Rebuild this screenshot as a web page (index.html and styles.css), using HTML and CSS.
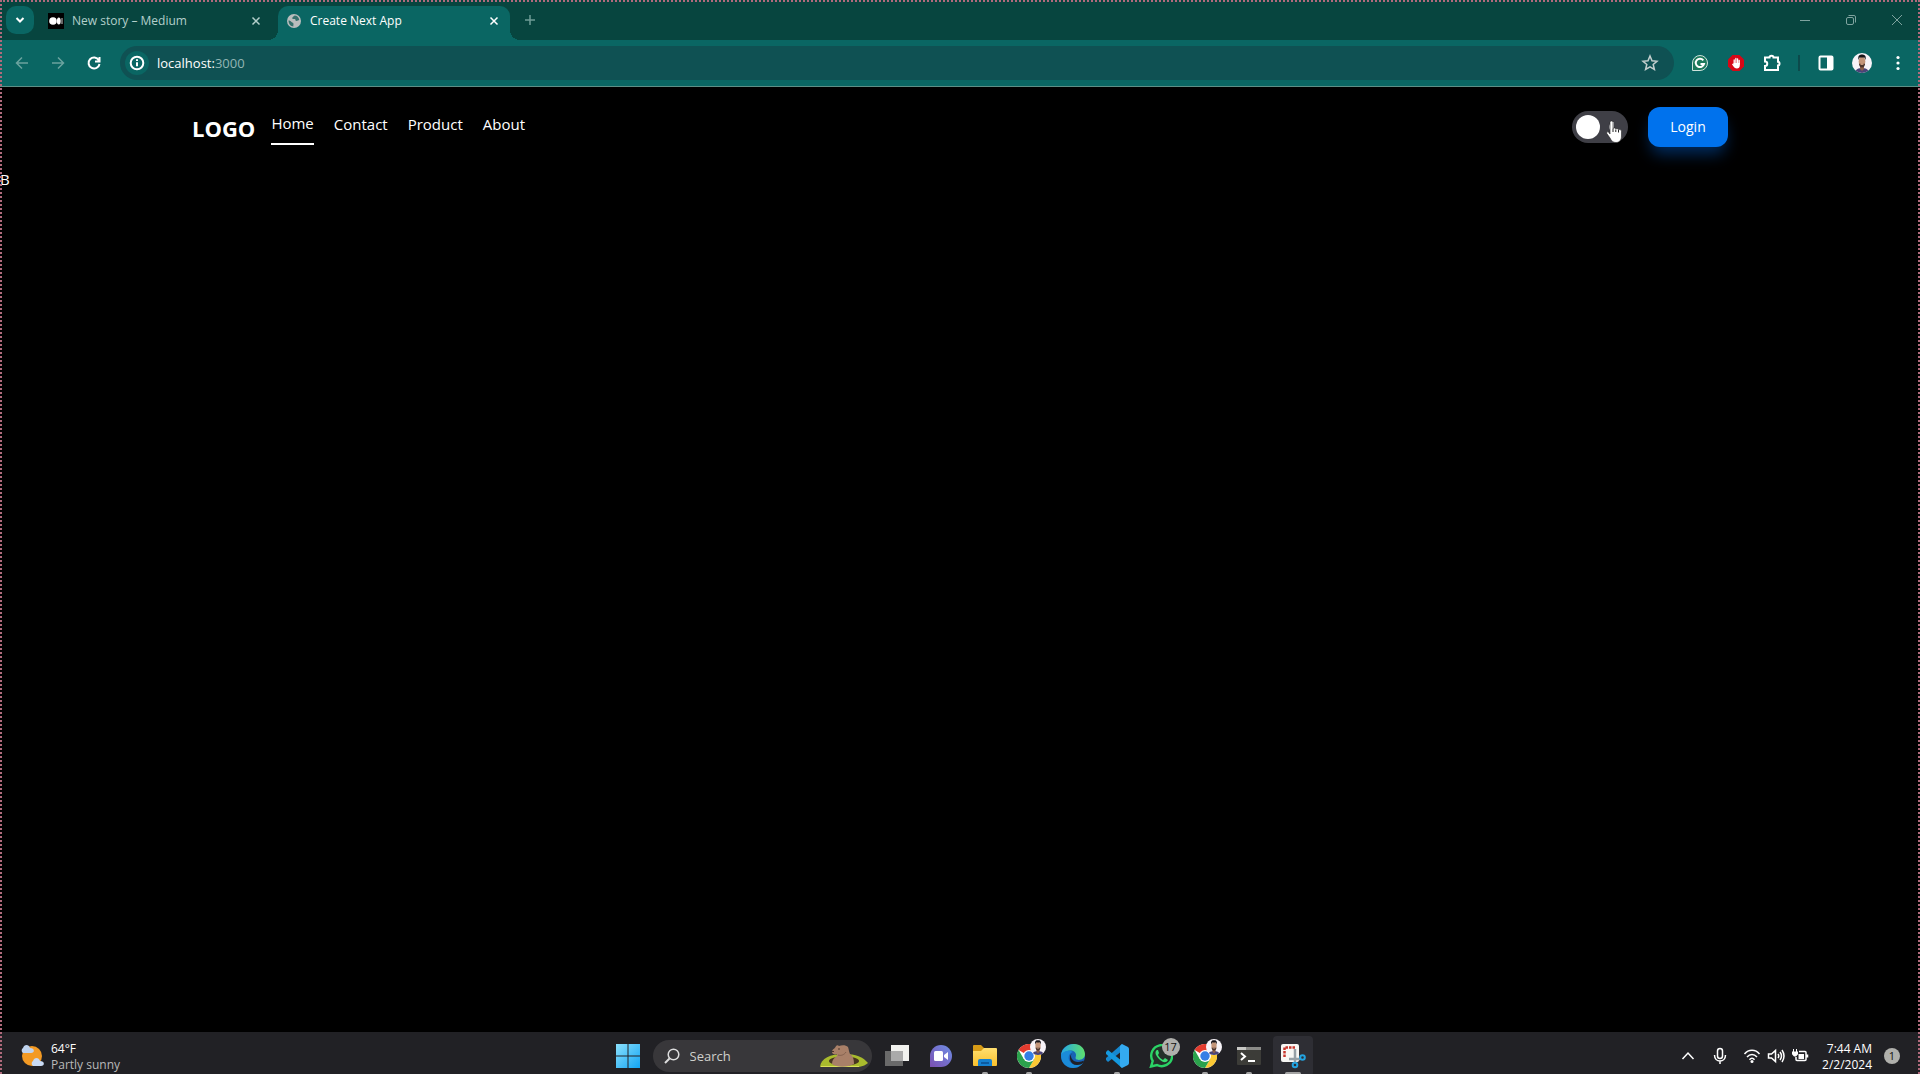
FILE: index.html
```html
<!DOCTYPE html>
<html lang="en">
<head>
<meta charset="utf-8">
<title>Create Next App</title>
<link rel="stylesheet" href="styles.css">
</head>
<body>
<svg class="defs" aria-hidden="true">
  <defs>
    <clipPath id="face-clip"><circle cx="10" cy="10" r="10"/></clipPath>
    <linearGradient id="win" x1="0" y1="0" x2="1" y2="1"><stop offset="0" stop-color="#8be0fc"/><stop offset="1" stop-color="#12a5f4"/></linearGradient>
    <linearGradient id="purple" x1="0" y1="1" x2="1" y2="0"><stop offset="0" stop-color="#7b4fb0"/><stop offset="1" stop-color="#6f8fe6"/></linearGradient>
    <linearGradient id="folder" x1="0" y1="0" x2="0" y2="1"><stop offset="0" stop-color="#ffdf70"/><stop offset="1" stop-color="#f9c02c"/></linearGradient>
    <linearGradient id="edge-top" x1="0" y1="0" x2="1" y2="0"><stop offset="0" stop-color="#26a8e6"/><stop offset="1" stop-color="#5fe06c"/></linearGradient>
    <symbol id="face" viewBox="0 0 20 20">
      <g clip-path="url(#face-clip)">
        <rect width="20" height="20" fill="#f7f3f8"/>
        <path d="M3 20c0-4 4-5 7-5s7 1 7 5z" fill="#4a4478"/>
        <path d="M8 12h4v4l-2 2-2-2z" fill="#8b5e4a"/>
        <ellipse cx="10" cy="8.500" rx="3.300" ry="5" fill="#c39478"/>
        <path d="M6.500 7C5.500 2 8 1.500 10 1.500s4.500.5 3.500 5.500l-1-2.500h-5z" fill="#171317"/>
        <path d="M6.900 10.500c1 .6 5.200.6 6.200 0-.2 2.500-1.300 4-3.100 4s-2.800-1.500-3.100-4z" fill="#4a332c"/>
        <path d="M8.500 11.500h3" stroke="#c39478"/>
      </g>
    </symbol>
    <symbol id="chrome" viewBox="0 0 24 24">
      <circle cx="12" cy="12" r="12" fill="#fff"/>
      <path d="M12 12 1.600 6A12 12 0 0 1 22.400 6z" fill="#e33b2e"/>
      <path d="M12 6h10.400A12 12 0 0 1 12 24l5.200-9z" fill="#fcc934"/>
      <path d="M6.800 15 1.600 6A12 12 0 0 0 12 24l5.200-9z" fill="#2ba24c"/>
      <circle cx="12" cy="12" r="6" fill="#fff"/><circle cx="12" cy="12" r="4.700" fill="#347fe5"/>
    </symbol>
  </defs>
</svg>

<div class="screen">
  <div class="tabstrip">
    <button class="tab-search" aria-label="Search tabs"><svg width="12" height="12" viewBox="0 0 12 12"><path d="M2.500 4 6 7.500 9.500 4" class="line bold"/></svg></button>
    <div class="tab">
      <svg width="16" height="16" viewBox="0 0 16 16"><rect width="16" height="16" fill="#000"/><circle cx="5" cy="8" r="3.800" fill="#fff"/><ellipse cx="10.800" cy="8" rx="1.900" ry="3.500" fill="#fff"/><path d="M14 5v6" stroke="#ccc"/></svg>
      <span class="tab-title">New story – Medium</span>
      <button class="close" aria-label="Close tab"><svg width="10" height="10" viewBox="0 0 10 10"><path d="m1.500 1.500 7 7m0-7-7 7" class="line"/></svg></button>
    </div>
    <div class="tab active">
      <svg width="16" height="16" viewBox="0 0 16 16"><circle cx="8" cy="8" r="7" fill="#b9bdbd"/><path d="M2.500 7.500c1.500 0 2 .5 3 1.500s2 .5 2 2-.5 1.500 0 2.500c-3 0-5-3-5-6zM8.500 2.500c-1 1.500-2.500 1-2 3.500h2.500c1 1 0 2 1.500 2l2.800-1c-.3-2.500-2.300-4.500-4.800-4.500z" fill="#35706c"/></svg>
      <span class="tab-title">Create Next App</span>
      <button class="close" aria-label="Close tab"><svg width="10" height="10" viewBox="0 0 10 10"><path d="m1.500 1.500 7 7m0-7-7 7" class="line"/></svg></button>
    </div>
    <button class="new-tab" aria-label="New tab"><svg width="12" height="12" viewBox="0 0 12 12"><path d="M6 1v10M1 6h10" class="line"/></svg></button>
    <div class="window-controls">
      <button aria-label="Minimize"><svg width="12" height="12" viewBox="0 0 12 12"><path d="M1 6.500h10" class="line thin"/></svg></button>
      <button aria-label="Restore"><svg width="12" height="12" viewBox="0 0 12 12"><rect x="1.500" y="3.500" width="7" height="7" rx="1.500" class="line thin"/><path d="M3.500 1.500H9a1.500 1.500 0 0 1 1.500 1.500v5.500" class="line thin"/></svg></button>
      <button aria-label="Close"><svg width="12" height="12" viewBox="0 0 12 12"><path d="m1 1 10 10M11 1 1 11" class="line thin"/></svg></button>
    </div>
  </div>

  <div class="toolbar">
    <button class="tool dim" aria-label="Back"><svg width="16" height="16" viewBox="0 0 16 16"><path d="M14 8H3m5-5.500L2.500 8 8 13.500" class="line"/></svg></button>
    <button class="tool dim" aria-label="Forward"><svg width="16" height="16" viewBox="0 0 16 16"><path d="M2 8h11M8 2.500 13.500 8 8 13.500" class="line"/></svg></button>
    <button class="tool" aria-label="Reload"><svg width="16" height="16" viewBox="0 0 16 16"><path d="M12.800 5.200A5.500 5.500 0 1 0 13.500 9M13.500 2v4.500H9" class="line bold"/></svg></button>
    <div class="omnibox">
      <button class="site-info" aria-label="View site information"><svg width="16" height="16" viewBox="0 0 16 16"><circle cx="8" cy="8" r="6.300" class="line bold"/><path d="M8 7.200v4M8 4.300v1.600" class="line bold"/></svg></button>
      <span class="url">localhost:<span>3000</span></span>
      <button class="star" aria-label="Bookmark this tab"><svg width="18" height="18" viewBox="0 0 18 18"><path d="m9 2 2 4.700 5 .5-3.800 3.300 1.200 5L9 12.900l-4.400 2.600 1.200-5L2 7.200l5-.5z" class="line"/></svg></button>
    </div>
    <div class="extensions">
      <button class="tool" aria-label="Grammarly"><svg width="18" height="18" viewBox="0 0 18 18"><path d="M1.500 16.500V9A7.500 7.500 0 1 1 9 16.500z" fill="#1d7a5c" stroke="#cfe3dc"/><path d="M12.300 6.300A4.200 4.200 0 1 0 13 10H9.500" class="line bold"/></svg></button>
      <button class="tool" aria-label="AdBlock"><svg width="18" height="18" viewBox="0 0 18 18"><path d="M5.500 1h7L17 5.500v7L12.500 17h-7L1 12.500v-7z" fill="#d60716"/><path d="M7.200 10V6M8.900 9V4.500M10.600 9V5M12.200 10V6.500" stroke="#fff" stroke-width="1.300" stroke-linecap="round"/><path d="M6.500 9h6.300v2.500c0 2-1.200 3-2.800 3-2 0-3.500-1.500-5-4.300.5-.7 1-.3 1.500.3z" fill="#fff"/></svg></button>
      <button class="tool" aria-label="Extensions"><svg width="18" height="18" viewBox="0 0 18 18"><path d="M2 3.500h4.500c0-2.500 4-2.500 4 0H15v4.200c2 0 2 3.800 0 3.800V16H2v-4c3 0 3-4.500 0-4.500z" class="line bold"/></svg></button>
      <span class="divider"></span>
      <button class="tool" aria-label="Side panel"><svg width="16" height="16" viewBox="0 0 16 16"><rect x="1.500" y="1.500" width="13" height="13" rx="1" class="line bold"/><path d="M9 1h6v14H9z" fill="currentColor"/></svg></button>
      <button class="tool" aria-label="Profile"><svg width="20" height="20"><use href="#face"/></svg></button>
      <button class="tool" aria-label="Menu"><svg width="16" height="16" viewBox="0 0 16 16" fill="currentColor"><circle cx="8" cy="2.500" r="1.600"/><circle cx="8" cy="8" r="1.600"/><circle cx="8" cy="13.500" r="1.600"/></svg></button>
    </div>
  </div>

  <main class="page">
    <header class="navbar">
      <span class="logo">LOGO</span>
      <nav class="links">
        <a href="#" class="current">Home</a>
        <a href="#">Contact</a>
        <a href="#">Product</a>
        <a href="#">About</a>
      </nav>
      <div class="actions">
        <label class="switch">
          <input type="checkbox" aria-label="Dark mode">
          <svg class="moon" width="12" height="12" viewBox="0 0 12 12"><path d="M6 1a5 5 0 0 0 0 10z" fill="#c4c4c8"/></svg>
          <svg class="pointer" width="18" height="24" viewBox="0 0 18 24"><path d="M4 2.500C4 .5 7 .5 7 2.500v6c1-1 2.500-.5 2.800.5 1-.7 2.500-.3 2.700.8 1.200-.6 3 0 3 1.700V16c0 4-2 6.500-5.500 6.500-3 0-4.500-1.500-6-4.500L.8 13.500c-.5-1.600 1.200-2.200 2.200-1L4 14z" fill="#fff" stroke="#222" stroke-width=".6"/><path d="M7 8.500V12M9.800 9.500V12M12.500 10v2.500" stroke="#222"/></svg>
        </label>
        <button class="login">Login</button>
      </div>
    </header>
    <p class="body-text">B</p>
  </main>

  <footer class="taskbar">
    <div class="weather">
      <svg width="26" height="26" viewBox="0 0 26 26"><circle cx="13" cy="13" r="10" fill="#f39a24"/><path d="M4 10a3 3 0 0 1 0-5c1-4 6-4 7 0 5 0 5 5 1 5z" fill="#bfd3ee"/><path d="M14 23a3 3 0 0 1 0-5c1-4 6-4 7 0 5 0 5 5 1 5z" fill="#c9daf3"/></svg>
      <div class="weather-text"><span>64°F</span><span class="muted">Partly sunny</span></div>
    </div>
    <div class="apps">
      <button class="app" aria-label="Start"><svg width="24" height="24" viewBox="0 0 24 24" fill="url(#win)"><path d="M0 0h11.500v11.500H0zM12.500 0H24v11.500H12.500zM0 12.500h11.500V24H0zM12.500 12.500H24V24H12.500z"/></svg></button>
      <label class="search">
        <svg width="16" height="16" viewBox="0 0 16 16"><circle cx="9.500" cy="6.500" r="5.300" class="line"/><path d="M5.500 10.500 1 15" class="line bold"/></svg>
        <input type="text" placeholder="Search">
        <svg width="48" height="24" viewBox="0 0 48 24"><path d="M0 23C1 14 10 10 24 10c12 0 19 3 24 9-2 2-5 3-9 4z" fill="#a9bb2d"/><path d="M1 22.500h38" stroke="#dbe05a"/><ellipse cx="24" cy="17" rx="15" ry="4.500" fill="#483620"/><path d="M12 20c0-4 2-6 5-8v-2c-2 1-5 0-5-2 0-3 3-3 4-6 1-1 2-1 3 0 3-1 7-1 9 1 1 3 1 5 2 7 3 2 4 5 4 10-5 3-17 4-22 0z" fill="#a98068"/><path d="M12 7.500h2M18 5h2" stroke="#4b3529"/><path d="M18 11c3 1 6 0 8-3" stroke="#83604e" fill="none"/></svg>
      </label>
      <button class="app" aria-label="Task view"><svg width="24" height="24" viewBox="0 0 24 24"><path d="M6 1h18v16H6z" fill="#f1f1ee"/><path d="M0 7h18v15H0z" fill="#777" opacity=".85"/><path d="M6 7h12v10H6z" fill="#aaa"/></svg></button>
      <button class="app" aria-label="Chat"><svg width="24" height="24" viewBox="0 0 24 24"><path d="M12 1a11 11 0 0 1 0 22H1V12A11 11 0 0 1 12 1z" fill="url(#purple)"/><rect x="5" y="7" width="9" height="10" rx="1.500" fill="#fff"/><path d="m15 11 4-3v8l-4-3z" fill="#fff"/></svg></button>
      <button class="app running" aria-label="File Explorer"><svg width="24" height="24" viewBox="0 0 24 24"><path d="M0 2q0-1 1-1h7l3 3v5H0z" fill="#d79b16"/><path d="M0 7h8l3-3h12q1 0 1 1v16q0 1-1 1H1q-1 0-1-1z" fill="url(#folder)"/><path d="M5 22v-5q0-2 2-2h10q2 0 2 2v5z" fill="#1580cf"/><path d="M8 19h8" stroke="#0c5a9f" stroke-width="2"/></svg></button>
      <button class="app running" aria-label="Chrome"><svg width="24" height="24"><use href="#chrome"/></svg><svg class="badge face" width="16" height="16"><use href="#face"/></svg></button>
      <button class="app" aria-label="Edge"><svg width="24" height="24" viewBox="0 0 24 24"><circle cx="12" cy="12" r="12" fill="#1763b5"/><path d="M0 11C2-3 23-4 24 10c0 6-7 7-9 5-1-1 0-2 0-4 0-5-8-7-15 0z" fill="url(#edge-top)"/><path d="M0 11c3-5 9-5 12-3-4 1-5 5-4 8 2 5 8 6 14 3-3 5-12 7-18 2-3-3-4-6-4-10z" fill="#1b8bd8"/><path d="M11 9c-3 4 1 9 6 9 3 0 6-2 6-1-1 3-4 4-7 4-7 0-9-8-5-12z" fill="#202027"/></svg></button>
      <button class="app running" aria-label="Visual Studio Code"><svg width="24" height="24" viewBox="0 0 24 24"><path d="m17 7-14 11-2-2v-2L17 0z" fill="#1688cf"/><path d="M17 17 3 6 1 8v2l16 14z" fill="#1599df"/><path d="m17 0 6 3q1 1 1 2v14q0 1-1 2l-6 3-2-2V2z" fill="#34aaf0"/></svg></button>
      <button class="app" aria-label="WhatsApp"><svg width="24" height="24" viewBox="0 0 24 24"><path d="M2 22.500 3.700 17A10.500 10.500 0 1 1 8 21z" fill="#243029" stroke="#2ad365" stroke-width="2.400"/><path d="M8 6c-3 2-1 6 2 9s7 5 9 1l-3-2-2 2c-2-1-4-3-5-5l1-2-1-3z" fill="#38dc70"/></svg><span class="badge count">17</span></button>
      <button class="app running" aria-label="Chrome, second profile"><svg width="24" height="24"><use href="#chrome"/></svg><svg class="badge face" width="16" height="16"><use href="#face"/></svg></button>
      <button class="app running" aria-label="Terminal"><svg width="24" height="24" viewBox="0 0 24 24"><rect y="3" width="24" height="18" rx="1" fill="#3c3c38"/><path d="M0 3h24v3H0z" fill="#8b8b88"/><path d="M0 3h9v3H0z" fill="#c8c8c5"/><path d="m4 9 4 3.500L4 16" fill="none" stroke="#fff" stroke-width="2"/><path d="M11 17h7" stroke="#fff" stroke-width="2"/></svg></button>
      <button class="app running open" aria-label="Snipping Tool"><svg width="26" height="26" viewBox="0 0 26 26"><rect x="1" y="1" width="18" height="18" rx="2" fill="#f7f7f4"/><path d="M4.500 14V4.500H15" fill="none" stroke="#c8372d" stroke-width="2.500" stroke-dasharray="2.500 1"/><path d="M15 6v13M9 16h11" stroke="#96a0a6" stroke-width="2.500"/><circle cx="22.500" cy="14.500" r="2.300" fill="none" stroke="#22a2df" stroke-width="2"/><circle cx="15" cy="22" r="2.300" fill="none" stroke="#22a2df" stroke-width="2"/></svg></button>
    </div>
    <div class="tray">
      <button aria-label="Show hidden icons"><svg width="14" height="14" viewBox="0 0 14 14"><path d="m1.500 10 5.500-6 5.500 6" class="line"/></svg></button>
      <button aria-label="Microphone"><svg width="14" height="18" viewBox="0 0 14 18"><rect x="4.500" y="1.500" width="5" height="10" rx="2.500" class="line"/><path d="M1.500 8c0 8 11 8 11 0M7 14v3" class="line"/></svg></button>
      <button class="status" aria-label="Network, sound and battery">
        <svg width="18" height="16" viewBox="0 0 18 16"><path d="M1.500 6c4-5 11-5 15 0M4 9c3-3.500 7-3.500 10 0M6.500 11.800c1.500-2 3.500-2 5 0" class="line"/><circle cx="9" cy="13.500" r="1.500" fill="currentColor"/></svg>
        <svg width="18" height="16" viewBox="0 0 18 16"><path d="M1.500 6v4h3l4 3.500v-11L4.500 6zM11 6q1.500 2 0 4M13 4q3 4 0 8M15 2q4 6 0 12" class="line"/></svg>
        <svg width="18" height="16" viewBox="0 0 18 16"><path d="M8 3.500h6q1 0 1 1v7q0 1-1 1H6q-1 0-1-1V9M16.500 6.500v3" class="line"/><path d="M7.500 6H13v5H7.500zM1 3.500h6v2.700L5 8.500H3L1 6.200zM2 1h1v3H2zM5 1h1v3H5z" fill="currentColor"/></svg>
      </button>
      <div class="clock"><time>7:44 AM</time><time>2/2/2024</time></div>
      <button class="notice" aria-label="Notifications"><span>1</span></button>
    </div>
  </footer>
</div>
</body>
</html>
```

FILE: styles.css
```css
* { box-sizing: border-box; }

body {
  margin: 0;
  background: #000;
  color: #fff;
  font-family: "Open Sans", "Noto Sans", sans-serif;
  font-size: 12px;
  line-height: 16px;
}

button {
  display: flex;
  align-items: center;
  justify-content: center;
  padding: 0;
  border: 0;
  background: none;
  color: inherit;
  font: inherit;
}

svg { display: block; flex: none; }
.defs { position: absolute; width: 0; height: 0; }
.line { fill: none; stroke: currentColor; stroke-width: 1.5; }
.line.bold { stroke-width: 2; }
.line.thin { stroke-width: 1; }

.screen {
  position: relative;
  display: flex;
  flex-direction: column;
  height: 100vh;
  overflow: hidden;
}

/* Dotted capture frame over the three visible edges */
.screen::after {
  content: "";
  position: absolute;
  inset: 0;
  border: 2px dotted #b06a7c;
  border-bottom: 0;
  pointer-events: none;
}

/* Browser tabs */
.tabstrip {
  display: flex;
  height: 40px;
  padding: 6px 0 0 6px;
  background: #07453f;
}
.tab-search {
  width: 28px;
  height: 28px;
  border-radius: 10px;
  background: #0a6663;
}
.tab {
  display: flex;
  align-items: center;
  gap: 8px;
  width: 244px;
  padding: 0 14px 4px;
  color: #b3cfcb;
}
.tab.active {
  position: relative;
  width: 232px;
  padding: 0 8px 4px;
  border-radius: 10px 10px 0 0;
  background: #0a6663;
  color: #fff;
}
.tab.active::before,
.tab.active::after {
  content: "";
  position: absolute;
  bottom: 0;
  width: 10px;
  height: 10px;
}
.tab.active::before { right: 100%; background: radial-gradient(circle at 0 0, transparent 10px, #0a6663 10px); }
.tab.active::after { left: 100%; background: radial-gradient(circle at 100% 0, transparent 10px, #0a6663 10px); }
.tab-title { flex: 1; white-space: nowrap; }
.close { width: 16px; height: 16px; }
.new-tab { width: 40px; height: 28px; color: #6f9c97; }
.window-controls { display: flex; margin-left: auto; color: #7fa39f; }
.window-controls button { width: 46px; height: 28px; }

/* Address bar */
.toolbar {
  display: flex;
  align-items: center;
  height: 47px;
  padding: 0 4px;
  border-bottom: 1px solid #5d8f86;
  background: #0a6663;
}
.tool { width: 36px; height: 36px; }
.tool.dim { color: #6ba39f; }
.omnibox {
  display: flex;
  flex: 1;
  align-items: center;
  height: 34px;
  margin: 0 8px;
  padding: 0 15px 0 5px;
  border-radius: 17px;
  background: #0f5153;
}
.site-info { width: 24px; height: 24px; border-radius: 50%; background: #0a6663; }
.url { flex: 1; margin-left: 8px; font-size: 13px; }
.url span { color: #93b5b3; }
.star { color: #c3cfce; }
.extensions { display: flex; align-items: center; }
.divider { width: 2px; height: 16px; margin: 0 8px; background: #0c4a4b; }

/* Web page */
.page { flex: 1; font-size: 16px; line-height: 24px; }
.navbar {
  display: flex;
  align-items: center;
  width: 80%;
  height: 80px;
  margin: 0 auto;
}
.logo { padding-top: 2px; font-size: 22px; font-weight: 700; }
.links { display: flex; align-items: center; gap: 20px; margin-left: 16px; padding-bottom: 6px; }
.links a { color: inherit; font-size: 15px; text-decoration: none; }
.links .current { padding: 8px 0; border-bottom: 2px solid #fff; }
.actions { display: flex; align-items: center; gap: 20px; margin-left: auto; }
.switch {
  position: relative;
  display: flex;
  align-items: center;
  justify-content: space-between;
  width: 56px;
  height: 32px;
  padding: 0 8px 0 4px;
  border-radius: 16px;
  background: #3f3f46;
}
.switch input {
  width: 24px;
  height: 24px;
  margin: 0;
  border-radius: 50%;
  background: #fff;
  appearance: none;
}
.pointer { position: absolute; top: 9px; left: 34px; }
.login {
  width: 80px;
  height: 40px;
  border-radius: 12px;
  background: #0072ed;
  box-shadow: 0 10px 15px -3px #006fee66;
  font-size: 14px;
}
.body-text { margin: 0; font-size: 15px; }

/* Taskbar, partly below the lower edge of the screen */
.taskbar {
  display: grid;
  grid-template-columns: 1fr auto 1fr;
  height: 42px;
  overflow: hidden;
  background: #212125;
}
.taskbar > div { display: flex; align-items: center; height: 48px; }
.weather { gap: 6px; padding-left: 19px; }
.weather-text { display: flex; flex-direction: column; padding-top: 2px; }
.muted { color: #b9b9b9; }
.app { position: relative; width: 44px; height: 48px; }
.running::after {
  content: "";
  position: absolute;
  top: 40px;
  width: 6px;
  height: 3px;
  border-radius: 2px;
  background: #a3a3a3;
}
.open.running::after { width: 16px; }
.open { width: 40px; height: 40px; margin: 0 2px; border-radius: 4px; background: #2e2e34; }
.open.running::after { top: 36px; }
.badge { position: absolute; }
.badge.face { top: 7px; right: 5px; }
.badge.count {
  top: 6px;
  right: 3px;
  width: 18px;
  height: 18px;
  border-radius: 50%;
  background: #b0b0ac;
  color: #111;
  font-size: 11px;
  line-height: 18px;
}
.search {
  display: flex;
  align-items: center;
  gap: 10px;
  width: 219px;
  height: 32px;
  margin: 0 3px;
  padding: 0 4px 0 11px;
  border-radius: 16px;
  background: #38373a;
  color: #ddd;
}
.search input {
  flex: 1;
  min-width: 0;
  padding: 0;
  border: 0;
  background: none;
  font: inherit;
  font-size: 13px;
}
.search input::placeholder { color: #d0d0cc; }
.tray { justify-content: flex-end; padding-right: 20px; }
.tray button { width: 32px; height: 32px; }
.tray .status { gap: 6px; width: 80px; }
.clock {
  display: flex;
  flex-direction: column;
  align-items: flex-end;
  width: 56px;
  padding-top: 2px;
}
.tray .notice { justify-content: flex-end; width: 28px; }
.notice span {
  width: 16px;
  height: 16px;
  border-radius: 50%;
  background: #b0b0ac;
  color: #111;
  font-size: 11px;
}
```
